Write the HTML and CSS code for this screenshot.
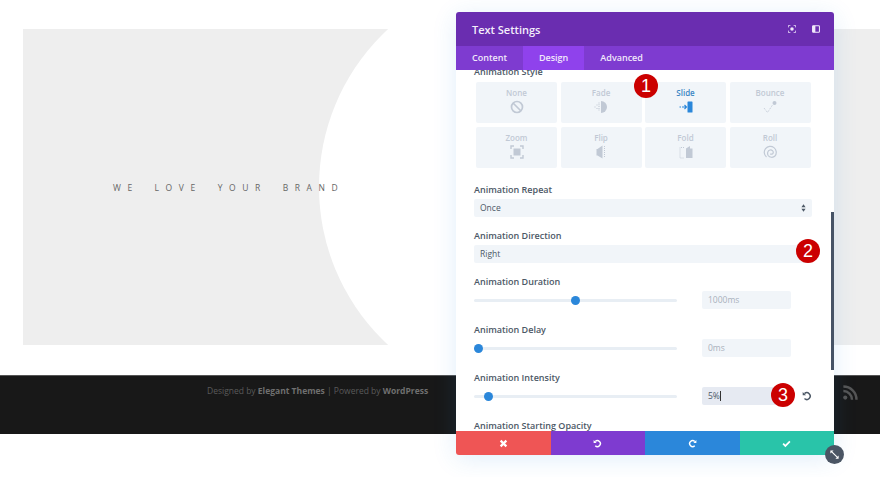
FILE: index.html
```html
<!DOCTYPE html>
<html lang="en">
<head>
<meta charset="utf-8">
<title>Text Settings</title>
<link rel="stylesheet" href="styles.css">
</head>
<body>
<main class="page">
  <section class="hero">
    <div class="hero-cut"></div>
    <p class="hero-text">WE LOVE YOUR BRAND</p>
  </section>
  <footer class="site-footer">
    <p class="credits">Designed by <strong>Elegant Themes</strong> | Powered by <strong>WordPress</strong></p>
    <svg class="rss" viewBox="0 0 16 16"><circle cx="2.4" cy="13.4" r="2.2" fill="currentColor"/><path d="M.4 6.4a9.2 9.2 0 0 1 9.2 9.2M.4 1.6a14 14 0 0 1 14 14" fill="none" stroke="currentColor" stroke-width="2.6"/></svg>
  </footer>
</main>

<section class="modal">
  <header class="modal-head">
    <h1 class="modal-title">Text Settings</h1>
    <div class="head-icons">
      <svg class="head-icon" viewBox="0 0 10 10"><path d="M.5 3V.5H3M7 .5h2.5V3M9.5 7v2.5H7M3 9.500H.5V7" fill="none" stroke="currentColor"/><circle cx="5" cy="5" r="2.200" fill="currentColor"/></svg>
      <svg class="head-icon" viewBox="0 0 10 10"><rect x=".7" y=".9" width="8.600" height="8.200" rx="1" fill="none" stroke="currentColor" stroke-width="1.300"/><rect x="1" y="1" width="3.200" height="8" fill="currentColor"/></svg>
    </div>
  </header>
  <nav class="tabs">
    <span class="tab">Content</span>
    <span class="tab tab-active">Design</span>
    <span class="tab">Advanced</span>
  </nav>
  <div class="modal-body">
    <div class="body-inner">
      <label class="label label-first">Animation Style</label>
      <div class="tiles">
        <div class="tile"><span>None</span><svg viewBox="0 0 14 14"><circle cx="7" cy="7" r="5.500" fill="none" stroke="currentColor" stroke-width="1.700"/><path d="M3 3l8 8" stroke="currentColor" stroke-width="1.700"/></svg></div>
        <div class="tile"><span>Fade</span><svg viewBox="0 0 14 14"><path d="M7 1a6 6 0 0 1 0 12z" fill="currentColor"/><path d="M5 2.500v1M5 6v1M5 9.500v1M3 4.500v1M3 8v1M1 6.500v1M5 4.300v1M5 8v1" stroke="currentColor" stroke-width="1.100"/></svg></div>
        <div class="tile tile-on"><span>Slide</span><svg viewBox="0 0 14 14"><rect x="8.500" y="1.500" width="5" height="11" rx=".6" fill="currentColor"/><path d="M.5 7H2M3 7h4M5.500 5l2 2-2 2" fill="none" stroke="currentColor" stroke-width="1.100"/></svg></div>
        <div class="tile"><span>Bounce</span><svg viewBox="0 0 14 14"><circle cx="11.500" cy="3" r="2" fill="currentColor"/><path d="M1 8l3.500 4.500L9.500 5" fill="none" stroke="currentColor" stroke-dasharray="1 1"/></svg></div>
        <div class="tile"><span>Zoom</span><svg viewBox="0 0 14 14"><rect x="3.500" y="3.500" width="7" height="7" fill="currentColor"/><path d="M1 4V1h3M10 1h3v3M13 10v3h-3M4 13H1v-3" fill="none" stroke="currentColor" stroke-width="1.400"/></svg></div>
        <div class="tile"><span>Flip</span><svg viewBox="0 0 14 14"><path d="M7 .5v13L2 10.500H1V4h1z" fill="currentColor" transform="translate(1.500)"/><path d="M10.500 1v12" stroke="currentColor" stroke-dasharray="1 1"/></svg></div>
        <div class="tile"><span>Fold</span><svg viewBox="0 0 14 14"><path d="M7 3.500L11 1v2.500h2.500V13H7z" fill="currentColor"/><path d="M5 2.500H1V13h4" fill="none" stroke="currentColor" stroke-dasharray="1 1"/></svg></div>
        <div class="tile"><span>Roll</span><svg viewBox="0 0 14 14"><path d="M3.500 12A6 6 0 1 1 12 11c-2 2-5.500 1.500-6.800-.5C4 8.500 4.700 5.500 7 5c2-.4 3.500 1 3.200 2.800C10 9 8.300 9.700 7.300 8.800" fill="none" stroke="currentColor" stroke-width="1.200"/></svg></div>
      </div>

      <label class="label label-gap-16">Animation Repeat</label>
      <div class="select">Once<svg class="select-arrows" viewBox="0 0 6 9"><path d="M3 0l2.500 3.500h-5zM3 9L.5 5.500h5z" fill="currentColor"/></svg></div>

      <label class="label">Animation Direction</label>
      <div class="select">Right</div>

      <label class="label">Animation Duration</label>
      <div class="slider-row">
        <div class="track"><i class="thumb thumb-duration"></i></div>
        <div class="num">1000ms</div>
      </div>

      <label class="label label-gap-15">Animation Delay</label>
      <div class="slider-row">
        <div class="track"><i class="thumb thumb-delay"></i></div>
        <div class="num">0ms</div>
      </div>

      <label class="label label-gap-15">Animation Intensity</label>
      <div class="slider-row">
        <div class="track"><i class="thumb thumb-intensity"></i></div>
        <div class="num num-active">5%<i class="caret"></i></div>
        <svg class="reset" viewBox="0 0 12 12"><path d="M3 3.200A4 4 0 1 1 3 9" fill="none" stroke="currentColor" stroke-width="1.800"/><path d="M.8 1.200v4h4z" fill="currentColor"/></svg>
      </div>

      <label class="label label-gap-15">Animation Starting Opacity</label>
    </div>
    <div class="scrollbar"></div>
  </div>
  <div class="actions">
    <button class="act act-red"><svg viewBox="0 0 10 10"><path d="M1.800 1.800l6.400 6.400M8.200 1.800L1.800 8.200" stroke="currentColor" stroke-width="2.400"/></svg></button>
    <button class="act act-purple"><svg viewBox="0 0 12 12"><path d="M3 3.200A4 4 0 1 1 3 9" fill="none" stroke="currentColor" stroke-width="1.900"/><path d="M.8 1.200v4h4z" fill="currentColor"/></svg></button>
    <button class="act act-blue"><svg viewBox="0 0 12 12"><path d="M9 3.200A4 4 0 1 0 9 9" fill="none" stroke="currentColor" stroke-width="1.900"/><path d="M11.200 1.200v4h-4z" fill="currentColor"/></svg></button>
    <button class="act act-green"><svg viewBox="0 0 12 12"><path d="M1.500 6.300l3 3 6-6" fill="none" stroke="currentColor" stroke-width="2.300"/></svg></button>
  </div>
  <span class="resize"><svg viewBox="0 0 12 12"><path d="M2.500 2.500l7 7" stroke="currentColor" stroke-width="1.200"/><path d="M1.500 1.500h3.500l-3.500 3.500zM10.500 10.500H7l3.500-3.500z" fill="currentColor"/></svg></span>
</section>

<span class="badge badge-1">1</span>
<span class="badge badge-2">2</span>
<span class="badge badge-3">3</span>
</body>
</html>
```
FILE: styles.css
```css
* { box-sizing: border-box; }
html, body { margin: 0; padding: 0; }
body {
  width: 880px;
  height: 477px;
  overflow: hidden;
  position: relative;
  background: #fff;
  font-family: "Open Sans", sans-serif;
}
.page { padding-top: 29px; }
.hero {
  position: relative;
  height: 316px;
  margin-left: 23px;
  background: #eee;
  overflow: hidden;
  display: flex;
  align-items: center;
  padding-left: 90px;
}
.hero-cut {
  position: absolute;
  left: 296px;
  top: -57px;
  width: 430px;
  height: 430px;
  border-radius: 50%;
  background: #fff;
}
.hero-text {
  position: relative;
  margin: 0;
  font-size: 8.500px;
  font-weight: 400;
  letter-spacing: 6.600px;
  word-spacing: 7px;
  color: #666;
  white-space: nowrap;
}
.site-footer {
  margin-top: 30px;
  height: 59px;
  background: #181818;
  border-top: 1px solid #555;
  display: flex;
  justify-content: space-between;
  padding: 8px 22px 0 207px;
}
.credits {
  margin: 0;
  font-size: 8.500px;
  line-height: 14px;
  color: #5a5a5a;
  white-space: nowrap;
}
.credits strong { font-weight: 700; color: #6f6f6f; }
.rss { width: 15px; height: 15px; color: #555; margin-top: 1px; }

.modal {
  position: absolute;
  left: 456px;
  top: 12px;
  width: 378px;
  height: 443px;
  display: flex;
  flex-direction: column;
  background: #fff;
  border-radius: 3px;
  box-shadow: 0 4px 24px rgba(43, 135, 218, .14);
}
.modal-head {
  flex: none;
  height: 34px;
  background: #6a2db0;
  border-radius: 3px 3px 0 0;
  color: #fff;
  display: flex;
  align-items: center;
  justify-content: space-between;
  padding: 0 14px 0 16px;
}
.modal-title { margin: 0; font-size: 11px; font-weight: 600; color: #f4eefb; }
.head-icons { display: flex; gap: 16px; align-items: center; }
.head-icon { width: 8px; height: 8px; color: #f0e8fa; }
.tabs {
  flex: none;
  height: 24px;
  background: #7e3bd0;
  display: flex;
  font-size: 9px;
  font-weight: 600;
  color: #f1e9fb;
}
.tab { padding: 0 16px; line-height: 24px; }
.tab:first-child { padding-right: 16px; }
.tab-active { background: #8f42ec; }
.modal-body {
  position: relative;
  flex: 1;
  min-height: 0;
  overflow: hidden;
}
.body-inner { margin-top: -4px; padding-left: 18px; width: 360px; }
.label {
  display: block;
  height: 12px;
  margin: 13px 0 3px;
  font-size: 9px;
  line-height: 12px;
  font-weight: 600;
  color: #4c5866;
  white-space: nowrap;
}
.label-first { margin: 0 0 4px; }
.label-gap-16 { margin-top: 16px; }
.label-gap-15 { margin-top: 15px; }
.tiles {
  display: grid;
  grid-template-columns: repeat(4, 81px);
  grid-auto-rows: 41px;
  gap: 4px 3.500px;
  margin-left: 2px;
}
.tile {
  background: #f1f5f9;
  border-radius: 2px;
  display: flex;
  flex-direction: column;
  align-items: center;
  padding-top: 5px;
  font-size: 8px;
  line-height: 12px;
  font-weight: 600;
  color: #c1c9d5;
}
.tile svg { width: 14px; height: 14px; margin-top: 1px; }
.tile-on { color: #2b87da; }
.tile-on span { color: #3a86c4; }
.select {
  position: relative;
  width: 338px;
  height: 18px;
  background: #f1f5f9;
  border-radius: 2px;
  padding-left: 6px;
  font-size: 8.500px;
  line-height: 18px;
  color: #4c5866;
}
.select-arrows {
  position: absolute;
  right: 6px;
  top: 5px;
  width: 5px;
  height: 8px;
  color: #4c5866;
}
.slider-row { display: flex; align-items: center; height: 18px; }
.track {
  position: relative;
  width: 203px;
  height: 3px;
  background: #e8eef4;
  border-radius: 2px;
  margin-right: 25px;
}
.thumb {
  position: absolute;
  top: -3px;
  width: 9px;
  height: 9px;
  border-radius: 50%;
  background: #2b87da;
}
.thumb-duration { left: 97px; }
.thumb-delay { left: 0; }
.thumb-intensity { left: 9.500px; }
.num {
  width: 89px;
  height: 18px;
  background: #f1f5f9;
  border-radius: 2px;
  padding-left: 6px;
  font-size: 8.500px;
  line-height: 18px;
  color: #a9b1bc;
}
.num-active { background: #e6eaf2; color: #4c5866; display: flex; align-items: center; }
.caret { width: 1px; height: 10px; background: #333; margin-left: 0; }
.reset { width: 10px; height: 10px; margin-left: 11px; color: #4c5866; }
.scrollbar {
  position: absolute;
  right: 0;
  top: 142px;
  width: 3px;
  height: 158px;
  background: #465366;
}
.actions { flex: none; height: 24px; display: flex; position: relative; }
.act {
  flex: 1;
  border: 0;
  padding: 0;
  color: #fff;
  display: flex;
  align-items: center;
  justify-content: center;
}
.act svg { width: 9px; height: 9px; }
.act-red { background: #ef5555; border-radius: 0 0 0 3px; }
.act-purple { background: #7e3bd0; }
.act-blue { background: #2b87da; }
.act-green { background: #29c4a9; border-radius: 0 0 3px 0; }
.resize {
  position: absolute;
  right: -10px;
  bottom: -9px;
  width: 19px;
  height: 19px;
  border-radius: 50%;
  background: #4a5564;
  color: #fff;
  display: flex;
  align-items: center;
  justify-content: center;
}
.resize svg { width: 11px; height: 11px; }
.badge {
  position: absolute;
  width: 24px;
  height: 24px;
  border-radius: 50%;
  background: #cb0000;
  color: #fff;
  font-family: "Liberation Sans", sans-serif;
  font-size: 18px;
  line-height: 24px;
  text-align: center;
}
.badge-1 { left: 634px; top: 74px; }
.badge-2 { left: 796px; top: 239px; }
.badge-3 { left: 771px; top: 383px; }
```
